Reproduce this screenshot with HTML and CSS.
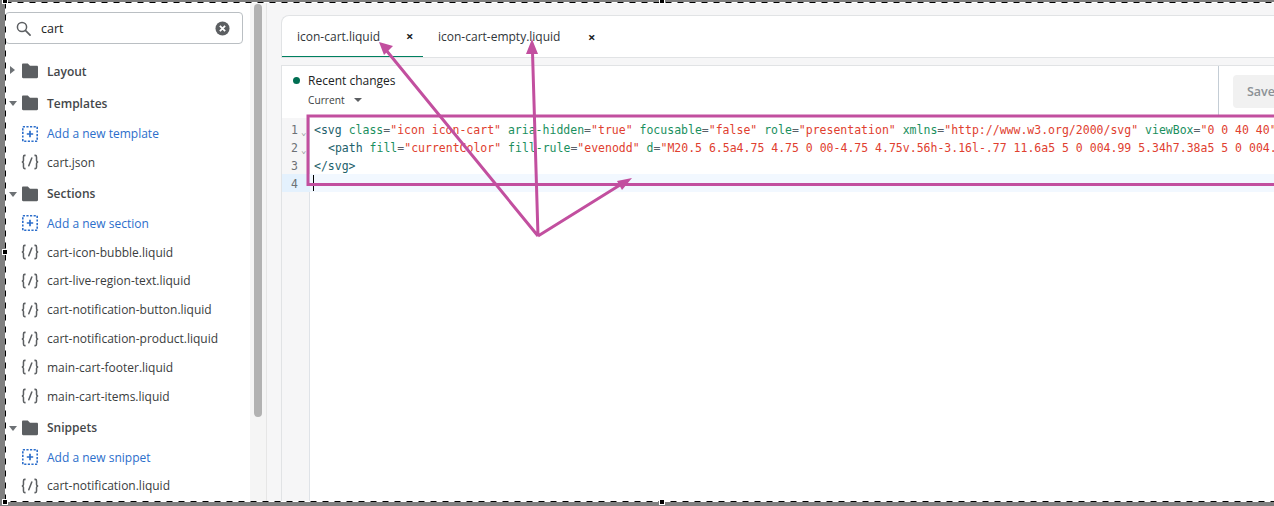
FILE: index.html
```html
<!DOCTYPE html>
<html lang="en">
<head>
<meta charset="utf-8">
<title>Theme code editor</title>
<link rel="stylesheet" href="styles.css">
</head>
<body>
<svg width="0" height="0" class="defs">
  <symbol id="folder" viewBox="0 0 16 16"><path d="M0 1.700C0 1 .5.5 1.200.5h4.600l2.200 2.200h6.800c.7 0 1.200.5 1.200 1.200v10.200c0 .7-.5 1.200-1.200 1.200H1.200C.5 15.300 0 14.800 0 14.100z" fill="#5c5f62"/></symbol>
  <symbol id="add" viewBox="0 0 16 16"><rect x=".8" y=".8" width="14.400" height="14.400" fill="none" stroke="#2c6ecb" stroke-width="1.600" stroke-dasharray="2.200 1.400"/><path d="M8 4.800v6.400M4.800 8h6.400" stroke="#2c6ecb" stroke-width="1.700"/></symbol>
  <symbol id="code" viewBox="0 0 19 16"><g fill="none" stroke="#5c5f62" stroke-width="1.600"><path d="M4.800 1H4C2.900 1 2.600 1.800 2.600 2.700v3.700c0 .8-.6 1.400-1.600 1.600 1 .2 1.600.8 1.600 1.600v3.700c0 .9.300 1.700 1.400 1.700h.8"/><path d="M14.200 1h.8c1.100 0 1.400.8 1.400 1.700v3.700c0 .8.600 1.400 1.600 1.600-1 .2-1.600.8-1.600 1.600v3.700c0 .9-.3 1.700-1.400 1.700h-.8"/><path d="M11.400 3.800 8.200 12" stroke-linecap="round"/></g></symbol>
</svg>

<div class="app">
  <aside class="sidebar">
    <div class="search">
      <svg class="search-icon" viewBox="0 0 16 16"><circle cx="6.400" cy="6.400" r="4.900" fill="none" stroke="#5c5f62" stroke-width="1.600"/><path d="m10 10 5 5" stroke="#5c5f62" stroke-width="1.800" stroke-linecap="round"/></svg>
      <span class="search-text">cart</span>
      <svg class="clear-icon" viewBox="0 0 16 16"><circle cx="8" cy="8" r="7.500" fill="#5c5f62"/><path d="m5.200 5.200 5.600 5.600m0-5.600-5.600 5.600" stroke="#fff" stroke-width="1.900"/></svg>
    </div>
    <ul class="tree">
      <li class="row folder"><span class="caret caret-right"></span><svg class="ico"><use href="#folder"/></svg><span>Layout</span></li>
      <li class="row folder"><span class="caret caret-down"></span><svg class="ico"><use href="#folder"/></svg><span>Templates</span></li>
      <li class="row add"><svg class="ico"><use href="#add"/></svg><span>Add a new template</span></li>
      <li class="row file"><svg class="ico"><use href="#code"/></svg><span>cart.json</span></li>
      <li class="row folder"><span class="caret caret-down"></span><svg class="ico"><use href="#folder"/></svg><span>Sections</span></li>
      <li class="row add"><svg class="ico"><use href="#add"/></svg><span>Add a new section</span></li>
      <li class="row file"><svg class="ico"><use href="#code"/></svg><span>cart-icon-bubble.liquid</span></li>
      <li class="row file"><svg class="ico"><use href="#code"/></svg><span>cart-live-region-text.liquid</span></li>
      <li class="row file"><svg class="ico"><use href="#code"/></svg><span>cart-notification-button.liquid</span></li>
      <li class="row file"><svg class="ico"><use href="#code"/></svg><span>cart-notification-product.liquid</span></li>
      <li class="row file"><svg class="ico"><use href="#code"/></svg><span>main-cart-footer.liquid</span></li>
      <li class="row file"><svg class="ico"><use href="#code"/></svg><span>main-cart-items.liquid</span></li>
      <li class="row folder"><span class="caret caret-down"></span><svg class="ico"><use href="#folder"/></svg><span>Snippets</span></li>
      <li class="row add"><svg class="ico"><use href="#add"/></svg><span>Add a new snippet</span></li>
      <li class="row file"><svg class="ico"><use href="#code"/></svg><span>cart-notification.liquid</span></li>
    </ul>
  </aside>
  <div class="scrollbar"><div class="thumb"></div></div>
  <main class="main">
    <div class="tabs">
      <div class="tab tab-active"><span class="tab-name">icon-cart.liquid</span><span class="close">×</span></div>
      <div class="tab tab-second"><span class="tab-name">icon-cart-empty.liquid</span><span class="close">×</span></div>
    </div>
    <section class="panel">
      <div class="toolbar">
        <div class="changes">
          <div class="changes-title"><span class="dot"></span>Recent changes</div>
          <div class="changes-sub">Current<span class="caret caret-down small"></span></div>
        </div>
        <div class="actions"><button class="save">Save</button></div>
      </div>
      <div class="editor">
        <div class="gutter">
          <div class="ln">1<span class="fold">⌄</span></div>
          <div class="ln">2<span class="fold">⌄</span></div>
          <div class="ln">3</div>
          <div class="ln ln-active">4</div>
        </div>
        <div class="code">
          <div class="line"><i class="t">&lt;svg</i> <i class="a">class</i>=<i class="s">"icon icon-cart"</i> <i class="a">aria-hidden</i>=<i class="s">"true"</i> <i class="a">focusable</i>=<i class="s">"false"</i> <i class="a">role</i>=<i class="s">"presentation"</i> <i class="a">xmlns</i>=<i class="s">"http://www.w3.org/2000/svg"</i> <i class="a">viewBox</i>=<i class="s">"0 0 40 40"</i></div>
          <div class="line indent"><i class="t">&lt;path</i> <i class="a">fill</i>=<i class="s">"currentColor"</i> <i class="a">fill-rule</i>=<i class="s">"evenodd"</i> <i class="a">d</i>=<i class="s">"M20.5 6.5a4.75 4.75 0 00-4.75 4.75v.56h-3.16l-.77 11.6a5 5 0 004.99 5.34h7.38a5 5 0 004.</i></div>
          <div class="line"><i class="t">&lt;/svg&gt;</i></div>
          <div class="line line-active"><span class="cursor"></span></div>
        </div>
      </div>
    </section>
  </main>
</div>

<svg class="overlay" viewBox="0 0 1274 506">
  <g fill="none" stroke="#c24f9f" stroke-width="3">
    <rect x="308" y="116" width="980" height="68.500"/>
    <path d="M538 236 386 50M538 236 532.500 52M538 236 620 185"/>
  </g>
  <g fill="#c24f9f">
    <path d="m379 42 14 4-9 9z"/>
    <path d="m532 39 6 15h-12z"/>
    <path d="m632 178-10 12-5-9z"/>
  </g>
  <rect x="5.500" y="2.500" width="1280" height="499" fill="none" stroke="#fff"/>
  <rect x="5.500" y="2.500" width="1280" height="499" fill="none" stroke="#000" stroke-dasharray="6 6"/>
  <g fill="#000" stroke="#fff">
    <rect x="2.500" y="-1.500" width="5" height="5"/>
    <rect x="2.500" y="249.500" width="5" height="5"/>
    <rect x="2.500" y="499.500" width="5" height="5"/>
    <rect x="659.500" y="-1.500" width="5" height="5"/>
    <rect x="659.500" y="499.500" width="5" height="5"/>
  </g>
</svg>
</body>
</html>
```

FILE: styles.css
```css
* { box-sizing: border-box; }
html, body { margin: 0; height: 100%; }
body {
  width: 1274px;
  height: 506px;
  overflow: hidden;
  position: relative;
  background: #808080;
  font-family: "Open Sans", "Noto Sans", sans-serif;
  font-size: 12px;
  color: #202223;
}
.defs { position: absolute; }
.app {
  display: flex;
  height: 499px;
  margin: 3px 0 0 5px;
  background: #fff;
}
.sidebar { width: 245px; flex: none; padding-top: 9px; overflow: hidden; background: #fff; }
.search {
  display: flex;
  align-items: center;
  width: 238px;
  height: 32px;
  border: 1px solid #babfc3;
  border-radius: 4px;
  padding: 0 12px 0 10px;
  font-size: 12.500px;
}
.search-icon { width: 15px; height: 15px; flex: none; }
.search-text { margin-left: 10px; flex: 1; }
.clear-icon { width: 15px; height: 15px; flex: none; }
.tree { list-style: none; margin: 11px 0 0; padding: 0; }
.row { display: flex; align-items: center; padding-left: 17px; white-space: nowrap; color: #3a3d40; }
.row .ico { width: 16px; height: 16px; flex: none; margin-right: 9px; }
.folder { height: 32px; position: relative; font-weight: 600; color: #44474a; }
.file + .folder { padding-top: 2px; }
.file + .folder .caret-down { top: 15px; }
.add { height: 29px; color: #2c6ecb; }
.file { height: 28.800px; }
.file .ico { width: 18px; height: 16px; margin-right: 8px; margin-left: -1px; }
.caret { display: block; width: 0; height: 0; border-style: solid; border-color: transparent; }
.caret-right { position: absolute; left: 5px; top: 11px; border-width: 4.500px 0 4.500px 5px; border-left-color: #6d7175; }
.caret-down { position: absolute; left: 4px; top: 14px; border-width: 5px 4px 0 4px; border-top-color: #6d7175; }
.scrollbar { width: 16px; flex: none; background: #f5f5f5; padding: 1px 4px; }
.thumb { width: 8px; height: 413px; background: #b2b2b2; border-radius: 4px; }
.main {
  flex: 1;
  min-width: 0;
  background: #f6f6f7;
  border-left: 1px solid #e6e6e6;
  padding: 12px 0 0 14px;
  overflow: hidden;
}
.tabs {
  display: flex;
  height: 43px;
  background: #fff;
  border: 1px solid #e1e3e5;
  border-right: 0;
  border-radius: 8px 0 0 0;
}
.tab { display: flex; align-items: center; flex: none; position: relative; color: #30363a; }
.tab-active { width: 141px; padding-left: 15px; border-bottom: 1px solid #008060; }
.tab-second { padding-left: 15px; }
.tab-name { width: 109px; white-space: nowrap; }
.tab-second .tab-name { width: 150px; }
.close { font-size: 13px; font-weight: 700; color: #202223; }
.panel { margin-top: 7px; background: #fff; border: 1px solid #e1e3e5; border-right: 0; height: 440px; width: 1100px; }
.toolbar { display: flex; justify-content: space-between; height: 52px; }
.changes { padding: 5px 0 0 11px; }
.changes-title { display: flex; align-items: center; font-weight: 500; height: 18px; color: #202223; }
.dot { width: 7px; height: 7px; border-radius: 50%; background: #006e52; margin-right: 8px; }
.changes-sub { display: flex; align-items: center; font-size: 10.200px; margin: 3px 0 0 15px; height: 16px; color: #3a3d40; }
.caret.small { position: static; margin-left: 9px; border-width: 4px 4px 0 4px; border-top-color: #5c5f62; }
.actions { width: 200px; border-left: 1px solid #c4cdd5; padding: 9px 0 0 14px; position: absolute; left: 1218px; height: 51px; }
.save { width: 80px; height: 33px; border: 0; border-radius: 4px; background: #f1f1f1; color: #8c9196; font: 600 12.500px "Open Sans", sans-serif; text-align: left; padding-left: 14px; }
.editor { display: flex; font-family: "DejaVu Sans Mono", monospace; font-size: 11.500px; line-height: 18px; height: 390px; }
.gutter { width: 28px; flex: none; background: #f6f6f7; border-right: 1px solid #dfe3e8; padding-top: 2px; color: #6d7175; }
.ln { height: 18px; padding: 1px 0 0 9px; position: relative; }
.ln-active { background: #e4f1fd; margin-right: -1px; }
.fold { position: absolute; left: 19px; top: 3px; font-size: 9px; color: #8c9196; }
.code { flex: 1; padding-top: 2px; min-width: 0; overflow: hidden; }
.line { height: 18px; padding: 1px 0 0 4px; white-space: pre; color: #586069; }
.line i { font-style: normal; }
.indent { padding-left: 18px; }
.line-active { background: #f2f8ff; }
.cursor { display: block; width: 1px; height: 16px; background: #000; margin-left: -1px; }
.t { color: #22606b; }
.a { color: #1a8f5e; }
.s { color: #e0402f; }
.overlay { position: absolute; left: 0; top: 0; width: 1274px; height: 506px; pointer-events: none; }
```
